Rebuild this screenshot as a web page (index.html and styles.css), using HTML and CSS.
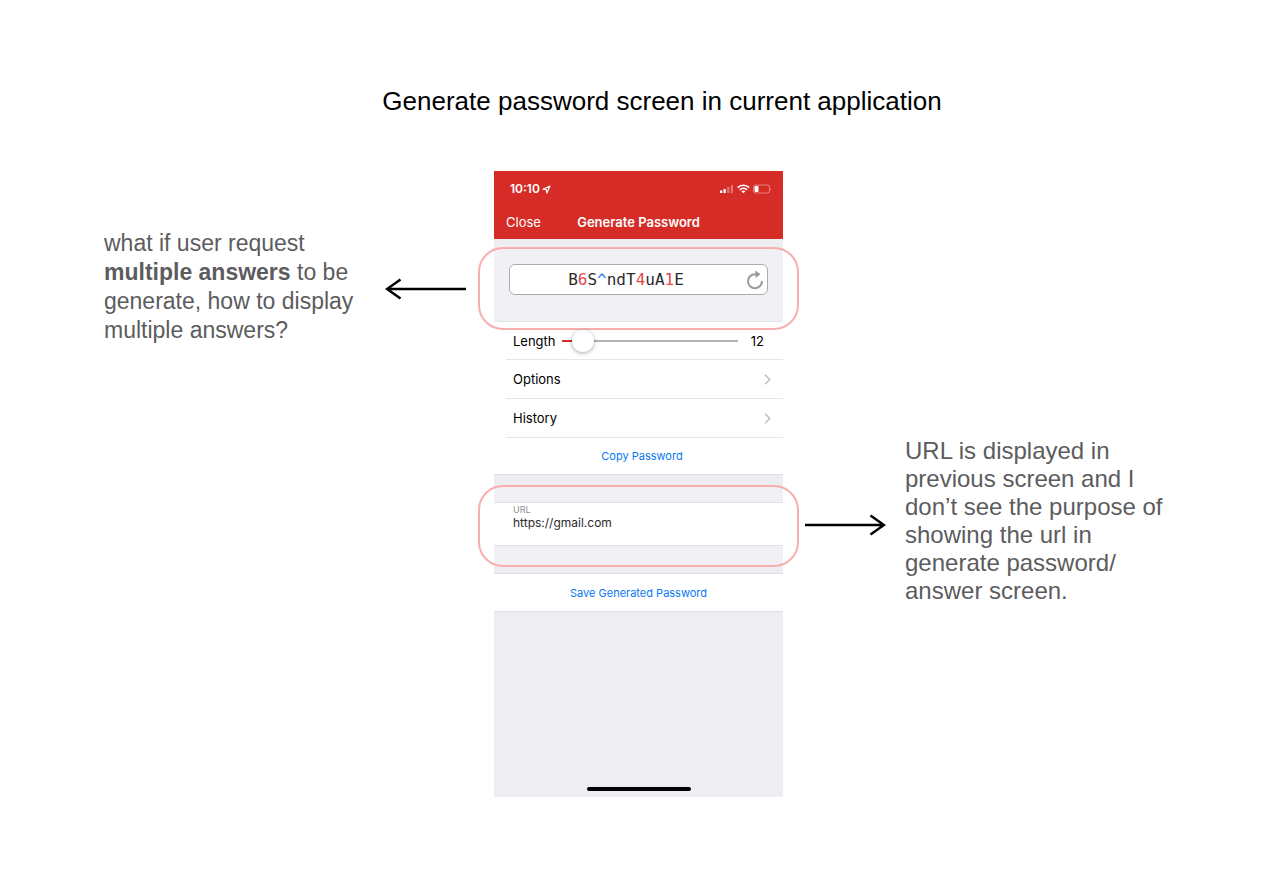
FILE: index.html
```
<!DOCTYPE html>
<html lang="en">
<head>
    <meta charset="UTF-8">
    <meta name="viewport" content="width=device-width, initial-scale=1.0">
    <title>Generate password screen</title>
    <link rel="stylesheet" href="styles.css">
</head>
<body>
    <h1>Generate password screen in current application</h1>

    <main class="board">
        <aside class="note note-left">
            <p>what if user request<br><strong>multiple answers</strong> to be<br>generate, how to display<br>multiple answers?</p>
            <svg class="arrow" width="81" height="22" viewBox="0 0 81 22" fill="none" stroke="#000" stroke-width="2.5">
                <path d="M81 11H2M15.500 1.500L2 11l13.500 9.500"/>
            </svg>
        </aside>

        <section class="phone">
            <header>
                <div class="status-bar">
                    <span class="time">10:10</span>
                    <svg class="location" width="9" height="9" viewBox="0 0 9 9" fill="none" stroke="#fff" stroke-width="1.200" stroke-linejoin="round">
                        <path d="M8 1L1 4.200l3.300.5L4.800 8z"/>
                    </svg>
                    <svg width="52" height="10" viewBox="0 0 52 10" fill="#fff">
                        <path d="M0 6.500h2.300V9H0zM3.500 5h2.300v4H3.500z"/>
                        <path d="M7.200 3h2.200v6H7.200zM10.800 1H13v8h-2.200z" opacity=".35"/>
                        <path d="M17.600 3.600a8.200 8.200 0 0 1 11.600 0M19.800 5.800a5.200 5.200 0 0 1 7.200 0" fill="none" stroke="#fff" stroke-width="1.600"/>
                        <path d="M21.400 7.300a3 3 0 0 1 4 0l-2 2z"/>
                        <rect x="33.500" y="1" width="16" height="8" rx="2" fill="none" stroke="#fff" stroke-opacity=".4"/>
                        <rect x="34.500" y="2" width="4" height="6" rx="1"/>
                        <path d="M50.500 3.500q1.500 1.500 0 3z" opacity=".5"/>
                    </svg>
                </div>
                <nav>
                    <button class="close">Close</button>
                    <h2>Generate Password</h2>
                </nav>
            </header>

            <div class="password-area">
                <div class="highlight"></div>
                <div class="password-box">
                    <output class="password">B<span class="digit">6</span>S<span class="symbol">^</span>ndT<span class="digit">4</span>uA<span class="digit">1</span>E</output>
                    <button class="refresh" aria-label="Generate again">
                        <svg width="18" height="20" viewBox="0 0 18 20" fill="none" stroke="#9a9a9e" stroke-width="2">
                            <path d="M11 4.200H9A7 7 0 1 0 16 11"/>
                            <path d="M9.500 0.500L14.500 4.200L9.500 8z" fill="#9a9a9e" stroke="none"/>
                        </svg>
                    </button>
                </div>
            </div>

            <div class="list">
                <div class="row">
                    <label for="length">Length</label>
                    <input type="range" id="length" min="1" max="156" value="12">
                    <output for="length">12</output>
                </div>
                <button class="row">
                    Options
                    <svg width="7" height="11" viewBox="0 0 7 11" fill="none" stroke="#bcbcc0" stroke-width="1.400"><path d="M1 .8l4.700 4.700L1 10.200"/></svg>
                </button>
                <button class="row">
                    History
                    <svg width="7" height="11" viewBox="0 0 7 11" fill="none" stroke="#bcbcc0" stroke-width="1.400"><path d="M1 .8l4.700 4.700L1 10.200"/></svg>
                </button>
                <button class="row action">Copy Password</button>
            </div>

            <div class="url-area">
                <div class="highlight"></div>
                <div class="url-field">
                    <label for="url">URL</label>
                    <input type="text" id="url" value="https://gmail.com">
                </div>
            </div>

            <button class="save action">Save Generated Password</button>

            <footer>
                <div class="home-bar"></div>
            </footer>
        </section>

        <aside class="note note-right">
            <svg class="arrow" width="81" height="22" viewBox="0 0 81 22" fill="none" stroke="#000" stroke-width="2.500">
                <path d="M0 11h79M65.500 1.500L79 11l-13.500 9.500"/>
            </svg>
            <p>URL is displayed in<br>previous screen and I<br>don’t see the purpose of<br>showing the url in<br>generate password/<br>answer screen.</p>
        </aside>
    </main>
</body>
</html>
```
FILE: styles.css
```
* {
    box-sizing: border-box;
}
body {
    margin: 0;
    padding: 85px 0;
    background: #fff;
    font-family: "Liberation Sans", Arial, sans-serif;
}
h1 {
    margin: 0 0 54px;
    padding-left: 44px;
    font-size: 26px;
    font-weight: normal;
    line-height: 32px;
    text-align: center;
}
h2, p {
    margin: 0;
}
button, input {
    margin: 0;
    padding: 0;
    border: none;
    background: none;
    font: inherit;
    color: inherit;
}

/* Board */
.board {
    display: grid;
    grid-template-columns: 1fr 289px 1fr;
    align-items: start;
    padding-right: 3px;
}
.note {
    display: flex;
    align-items: center;
    color: #5c5c5e;
    font-size: 24px;
    line-height: 28px;
    white-space: nowrap;
}
.note-left {
    justify-content: space-between;
    margin: 58px 28px 0 104px;
    font-size: 23px;
    line-height: 29px;
}
.note-right {
    gap: 19px;
    margin: 266px 0 0 22px;
}
.arrow {
    flex: none;
    margin-top: 4px;
}
.note-right .arrow {
    margin-top: 8px;
}

/* Phone */
.phone {
    background: #eeedf2;
    font-family: Inter, sans-serif;
    font-size: 13px;
    line-height: 16px;
    color: #000;
}
header {
    height: 68px;
    padding-top: 10px;
    background: #d52c27;
    color: #fff;
}
.status-bar {
    display: flex;
    align-items: center;
    padding: 0 11px 0 16px;
    font-size: 12px;
    font-weight: 600;
}
.location {
    margin: 0 auto 0 2px;
}
nav {
    display: grid;
    grid-template-columns: 1fr auto 1fr;
    margin-top: 17px;
    padding: 0 12px;
}
.close {
    justify-self: start;
}
h2 {
    font-size: 13px;
    font-weight: 600;
}
.password-area, .url-area {
    position: relative;
    border-bottom: 1px solid #dfdfe3;
}
.password-area {
    padding: 25px 15px 26px;
}
.password-box {
    position: relative;
    display: flex;
    align-items: center;
    height: 31px;
    padding-right: 3px;
    border: 1px solid #acacae;
    border-radius: 6px;
    background: #fff;
}
.password {
    flex: 1;
    padding-right: 4px;
    font-family: "DejaVu Sans Mono", monospace;
    font-size: 16px;
    color: #2b2b2d;
    text-align: center;
}
.digit {
    color: #e5484a;
}
.symbol {
    color: #2272e8;
}
.refresh {
    height: 20px;
}
.highlight {
    position: absolute;
    inset: 8px -16px -9px;
    border: 2px solid #f8aeae;
    border-radius: 25px;
    background: rgba(255, 255, 255, 0.2);
    pointer-events: none;
}
.url-area .highlight {
    inset: 10px -16px 6px;
}

/* List rows */
.list {
    padding-left: 12px;
    border-bottom: 1px solid #dfdfe3;
    background: #fff;
}
.row {
    display: flex;
    align-items: center;
    justify-content: space-between;
    width: 100%;
    height: 38px;
    padding: 0 12px 0 7px;
    border-bottom: 1px solid #e6e6e8;
}
button.row {
    height: 39px;
}
button.row.action {
    justify-content: center;
    height: 36px;
    border: none;
}
.row output {
    width: 19px;
    margin-right: 7px;
    text-align: right;
}
input[type="range"] {
    position: relative;
    z-index: 1;
    flex: 1;
    min-width: 0;
    height: 22px;
    margin: 0 7px 0 6px;
    appearance: none;
    background: linear-gradient(to right, #d52c27 7%, #b4b4b6 7%) center / 100% 2px no-repeat;
}
input[type="range"]::-webkit-slider-thumb {
    appearance: none;
    width: 22px;
    height: 22px;
    border-radius: 50%;
    background: #fff;
    box-shadow: 0 1px 4px rgba(0, 0, 0, 0.35);
}
.action {
    color: #0878f0;
    font-size: 11px;
    text-align: center;
}

/* Url */
.url-area {
    padding: 27px 0;
}
.url-field {
    position: relative;
    display: flex;
    flex-direction: column;
    height: 44px;
    padding: 2px 19px 0;
    border: solid #e2e2e6;
    border-width: 1px 0;
    background: #fff;
}
.url-field label {
    color: #8e8e93;
    font-size: 9px;
    line-height: 10px;
}
.url-field input {
    height: 16px;
    color: #2b2b2d;
    font-size: 12px;
}
.save {
    display: block;
    width: 100%;
    height: 38px;
    border-bottom: 1px solid #dfdfe3;
    background: #fff;
}
footer {
    display: flex;
    align-items: flex-end;
    justify-content: center;
    height: 185px;
    padding-bottom: 6px;
}
.home-bar {
    width: 104px;
    height: 4px;
    border-radius: 2px;
    background: #000;
}
```
